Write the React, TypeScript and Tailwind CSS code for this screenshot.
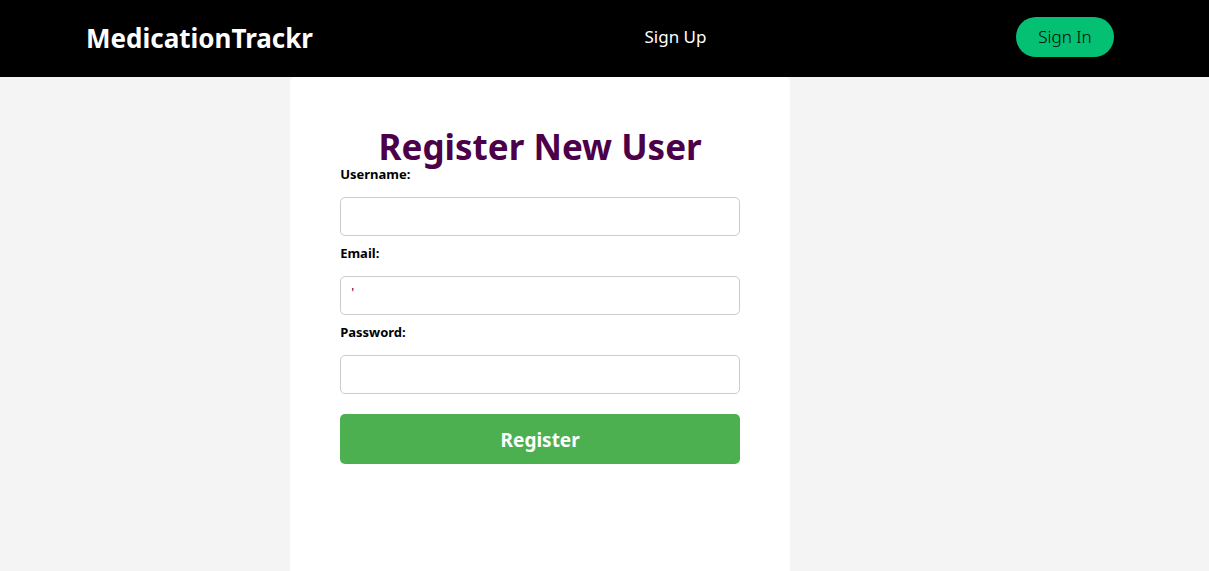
import React from "react";

type FieldProps = {
  id: string;
  label: string;
  type: string;
  initial?: string;
};

function Field({ id, label, type, initial = "" }: FieldProps) {
  return (
    <div className="flex flex-col">
      <label htmlFor={id} className="text-[13px] leading-4 font-bold text-black">
        {label}
      </label>
      <input
        id={id}
        name={id}
        type={type}
        defaultValue={initial}
        className="mt-[15px] mb-[9px] h-[39px] w-full rounded-[5px] border border-[#ccc] bg-white px-[10px] pb-2 text-[13px] text-[#4b0049] outline-none"
      />
    </div>
  );
}

export default function App() {
  return (
    <div className="flex min-h-screen flex-col bg-[#f4f4f4] font-['Noto_Sans','Open_Sans',sans-serif]">
      <header className="bg-black">
        <nav className="flex h-[77px] items-center justify-between pr-[95px] pb-[3px] pl-[86px]">
          <a href="#home" className="pt-0.5 text-[26px] leading-8 font-bold text-white">
            MedicationTrackr
          </a>
          <a href="#signup" className="pl-[22px] text-[17px] leading-6 text-white">
            Sign Up
          </a>
          <a
            href="#signin"
            className="flex h-10 w-[98px] items-center justify-center rounded-full bg-[#03c073] text-[17px] leading-6 font-light text-black"
          >
            Sign In
          </a>
        </nav>
      </header>
      <main className="flex flex-1 flex-col">
        <form className="ml-[24%] w-full max-w-[500px] flex-1 rounded-t-[5px] bg-white px-[50px] pt-[50px]">
          <h1 className="text-center text-[35px] leading-[39px] font-bold text-[#4b0049]">
            Register New User
          </h1>
          <Field id="username" label="Username:" type="text" />
          <Field id="email" label="Email:" type="text" initial="'" />
          <Field id="password" label="Password:" type="password" />
          <button
            type="button"
            className="mt-[11px] h-[50px] w-full rounded-[5px] bg-[#4caf50] pt-0.5 text-[19px] font-bold text-white"
          >
            Register
          </button>
        </form>
      </main>
    </div>
  );
}
